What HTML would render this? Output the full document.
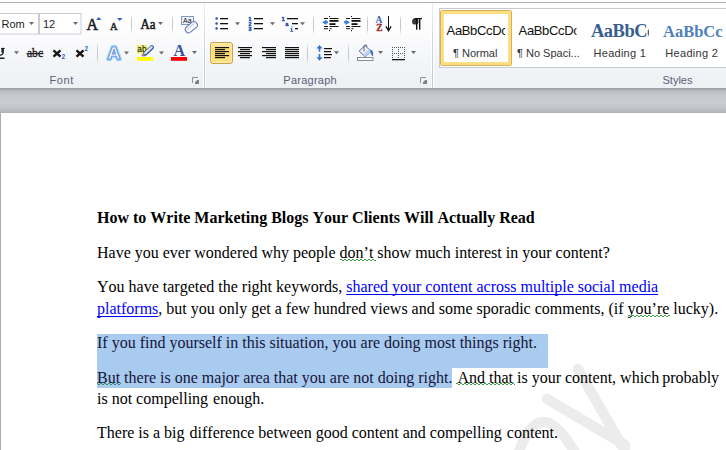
<!DOCTYPE html>
<html><head><meta charset="utf-8">
<style>
*{margin:0;padding:0;box-sizing:border-box}
html,body{width:726px;height:450px;overflow:hidden;background:#fff}
body{position:relative;font-family:"Liberation Sans",sans-serif}
.abs{position:absolute}
#ribbon{position:absolute;left:0;top:0;width:726px;height:89px;background:linear-gradient(#ffffff 0px,#fdfdfe 30px,#f1f3f6 70px,#eef0f3 88px);}
#topline{position:absolute;left:0;top:2px;width:726px;height:1px;background:#b0b4ba}
#rbot{position:absolute;left:0;top:88px;width:726px;height:1px;background:#9fa4ab}
.gsep{position:absolute;top:3px;width:1px;height:85px;background:linear-gradient(#eef0f3,#d3d7dd 40%,#c3c8ce)}
.gsep2{position:absolute;top:3px;width:1px;height:85px;background:#fff}
#band{position:absolute;left:0;top:89px;width:726px;height:24px;background:linear-gradient(#a3a8af 0px,#b9bdc3 2px,#c6cacf 6px,#cacdd2 13px,#c3c7cc 18px,#b8bcc2 22px,#adb1b7 24px)}
#page{position:absolute;left:1px;top:113px;width:725px;height:337px;background:#fff}
#pshadow{position:absolute;left:0;top:113px;width:1px;height:337px;background:#a4abb3}
.lbl{position:absolute;font-size:11px;color:#5b6472;top:73px;letter-spacing:0.1px}
.doc{position:absolute;font-kerning:none;font-family:"Liberation Serif",serif;font-size:16px;color:#000;white-space:pre;line-height:21px}
.sel{position:absolute;background:#a9cbf0}
.lk{color:#0000ff;text-decoration:underline;text-decoration-skip-ink:none;text-underline-offset:2px}
.n3{margin-left:-3px}
</style></head><body>
<div id="ribbon"></div>
<div id="topline"></div>
<div class="gsep2" style="left:203px"></div><div class="gsep" style="left:204px"></div><div class="gsep2" style="left:205px"></div>
<div class="gsep2" style="left:431px"></div><div class="gsep" style="left:432px"></div><div class="gsep2" style="left:433px"></div>
<div id="rbot"></div>
<!--RIBBON-->
<svg class="abs" style="left:0;top:0" width="726" height="89" viewBox="0 0 726 89">
<defs>
<linearGradient id="sepg" x1="0" y1="0" x2="0" y2="1"><stop offset="0" stop-color="#c4c9d1" stop-opacity="0"/><stop offset="0.3" stop-color="#c4c9d1"/><stop offset="0.7" stop-color="#c4c9d1"/><stop offset="1" stop-color="#c4c9d1" stop-opacity="0"/></linearGradient>
<linearGradient id="selg" x1="0" y1="0" x2="0" y2="1"><stop offset="0" stop-color="#fee7a0"/><stop offset="0.5" stop-color="#fdd96f"/><stop offset="1" stop-color="#fde58e"/></linearGradient>
</defs>
<g font-family="Liberation Sans">
<!-- ===== FONT GROUP ===== -->
<rect x="-1" y="13.5" width="39.5" height="20.5" fill="#fff" stroke="#c9ced5"/>
<rect x="39.5" y="13.5" width="41.5" height="20.5" fill="#fff" stroke="#c9ced5"/>
<text x="1.5" y="28" font-size="11" fill="#1e1e1e">Rom</text>
<path d="M29 22h5l-2.5 3z" fill="#6a6a6a"/>
<text x="43" y="28" font-size="11" fill="#1e1e1e">12</text>
<path d="M73 22h5l-2.5 3z" fill="#6a6a6a"/>
<!-- grow / shrink -->
<text x="86.6" y="29.8" font-family="Liberation Serif" font-size="16" fill="#222" stroke="#222" stroke-width="0.55">A</text>
<path d="M96 20h5.5l-2.75-3z" fill="#3864b8"/>
<text x="110" y="29.8" font-family="Liberation Serif" font-size="10.5" fill="#222" stroke="#222" stroke-width="0.45">A</text>
<path d="M117 18h5.5l-2.75 3z" fill="#3864b8"/>
<rect x="131" y="14" width="1" height="20" fill="url(#sepg)"/>
<text x="140.5" y="28.7" font-family="Liberation Serif" font-size="14.5" fill="#1a1a1a" stroke="#1a1a1a" stroke-width="0.55" textLength="15" lengthAdjust="spacingAndGlyphs">Aa</text>
<path d="M158 22h5l-2.5 3z" fill="#6a6a6a"/>
<rect x="172" y="14" width="1" height="20" fill="url(#sepg)"/>
<!-- clear formatting -->
<rect x="181.5" y="16.5" width="12" height="8" fill="#eef3fb" stroke="#7d98c4"/>
<text x="183" y="23" font-size="7" fill="#111" textLength="8.5" lengthAdjust="spacingAndGlyphs">Aa</text>
<g transform="translate(191.3 27.2) rotate(-40)"><rect x="-6.8" y="-3.4" width="13.6" height="6.8" rx="3.4" fill="#f6f8fd" stroke="#5f74ad"/><rect x="-4.5" y="-1.6" width="9.5" height="1.3" fill="#cdd8ee"/></g>
<!-- row 2 -->
<path d="M-2.5 48.6v3.8a2.8 2.8 0 0 0 5.6 0v-3.8" stroke="#1a1a1a" stroke-width="1.3" fill="none"/><path d="M2.4 48.6v4" stroke="#1a1a1a" stroke-width="1.9"/><path d="M1 48.4h3.8" stroke="#1a1a1a" stroke-width="1"/>
<rect x="0" y="57.5" width="4.5" height="1.5" fill="#1a1a1a"/>
<path d="M14 51.3h5l-2.5 3z" fill="#6a6a6a"/>
<text x="27" y="56.5" font-family="Liberation Serif" font-size="13" fill="#1a1a1a" textLength="16" lengthAdjust="spacingAndGlyphs" stroke="#1a1a1a" stroke-width="0.35">abc</text>
<rect x="26.5" y="53" width="17" height="1.2" fill="#222"/>
<path d="M53.5 50.3l7 6.3M60.5 50.3l-7 6.3" stroke="#151515" stroke-width="2.4"/>
<text x="61.6" y="59.2" font-size="6.5" font-weight="bold" fill="#2b62c9">2</text>
<path d="M76.5 50.3l7 6.3M83.5 50.3l-7 6.3" stroke="#151515" stroke-width="2.4"/>
<text x="84.6" y="51.2" font-size="6.5" font-weight="bold" fill="#2b62c9">2</text>
<rect x="97" y="43" width="1" height="21" fill="url(#sepg)"/>
<!-- text effects -->
<path d="M107.8 59.3L112.4 46.8H115.6L120.2 59.3H117.5L116.4 56.2H111.6L110.5 59.3Z M112.3 54H115.7L114 49.2Z" fill="none" stroke="#bfe6fa" stroke-width="4" stroke-linejoin="round"/>
<path d="M107.8 59.3L112.4 46.8H115.6L120.2 59.3H117.5L116.4 56.2H111.6L110.5 59.3Z M112.3 54H115.7L114 49.2Z" fill="none" stroke="#7cc8f2" stroke-width="2.2" stroke-linejoin="round"/>
<path d="M107.8 59.3L112.4 46.8H115.6L120.2 59.3H117.5L116.4 56.2H111.6L110.5 59.3Z M112.3 54H115.7L114 49.2Z" fill="#f1f0fc" fill-rule="evenodd" stroke="#6a8fd8" stroke-width="0.9" stroke-linejoin="round"/>
<path d="M124 51.4h5l-2.5 3z" fill="#6a6a6a"/>
<!-- highlight -->
<rect x="137" y="45" width="10.2" height="8.7" fill="#eeee70"/>
<text x="137.3" y="51.6" font-size="9" fill="#000" textLength="9.2" lengthAdjust="spacingAndGlyphs">ab</text>
<path d="M145.2 53.6l6.6-6.2" stroke="#3d5b9c" stroke-width="4.3" stroke-linecap="round"/>
<path d="M145.2 53.2l6.4-6" stroke="#c9d8ef" stroke-width="2.4" stroke-linecap="round"/>
<path d="M146 52.2l5-4.6" stroke="#f4f8ff" stroke-width="0.9" stroke-linecap="round"/>
<path d="M141.5 55.6l1.2-2.4 2 1.6z" fill="#b88a50"/>
<path d="M141.6 55.8h3.5" stroke="#555" stroke-width="0.9"/>
<rect x="137" y="57" width="16" height="3.8" fill="#ffff00"/>
<path d="M159 51.4h5l-2.5 3z" fill="#6a6a6a"/>
<!-- font color -->
<text x="173.5" y="56" font-family="Liberation Serif" font-weight="bold" font-size="16" fill="#2f4f9c">A</text>
<rect x="171" y="57" width="16" height="3.8" fill="#ff0000"/>
<path d="M192 51h5l-2.5 3z" fill="#6a6a6a"/>
<!-- label + launcher -->
<text x="49.5" y="84" font-size="11" letter-spacing="0.6" fill="#5a5f77">Font</text>
<path d="M192.5 83V77.5H198" stroke="#8d939b" stroke-width="1" fill="none"/>
<rect x="195" y="80" width="4" height="4" fill="#7b8189"/><path d="M195 80h2.2L195 82.2z" fill="#eef0f3"/>

<!-- ===== PARAGRAPH GROUP ===== -->
<g fill="#2a4fa8"><circle cx="216.6" cy="18.6" r="1.25"/><circle cx="216.6" cy="23.5" r="1.25"/><circle cx="216.6" cy="28.5" r="1.25"/></g>
<g fill="#111"><rect x="220" y="18" width="8" height="1.3"/><rect x="220" y="23" width="8" height="1.3"/><rect x="220" y="28" width="8" height="1.3"/></g>
<path d="M235 22.3h5l-2.5 3z" fill="#6a6a6a"/>
<g font-size="5.2" font-weight="bold" fill="#2350b8" stroke="#2350b8" stroke-width="0.45"><text x="248.6" y="20.6">1</text><text x="248.6" y="25.7">2</text><text x="248.6" y="30.9">3</text></g>
<g fill="#111"><rect x="254" y="18" width="9" height="1.3"/><rect x="254" y="23" width="9" height="1.3"/><rect x="254" y="28" width="9" height="1.3"/></g>
<path d="M270 22.3h5l-2.5 3z" fill="#6a6a6a"/>
<g font-size="5.2" font-weight="bold" fill="#2350b8" stroke="#2350b8" stroke-width="0.45"><text x="281.8" y="20.6">1</text><text x="285.6" y="25.8">a</text></g><path d="M290.5 28.3h1.8v2.8h0.9v0.7h-3v-0.7h0.9v-2.1h-0.6z M291.4 26.2h1v1h-1z" fill="#2350b8"/>
<g fill="#111"><rect x="287" y="18" width="11" height="1.3"/><rect x="292" y="23" width="6" height="1.3"/><rect x="295" y="28" width="3" height="1.3"/></g>
<path d="M300 22.3h5l-2.5 3z" fill="#6a6a6a"/>
<rect x="313" y="14" width="1" height="21" fill="url(#sepg)"/>
<!-- indents -->
<g fill="#111">
<rect x="329" y="16" width="1" height="1"/><rect x="329" y="30" width="1" height="1.2"/>
<rect x="324" y="18" width="4" height="1"/><rect x="329.5" y="18" width="9" height="1"/>
<rect x="329.5" y="20" width="9" height="1.8"/>
<rect x="329.5" y="23.2" width="6" height="1.8"/>
<rect x="324" y="26" width="4" height="1"/><rect x="329.5" y="26" width="9" height="1"/>
<rect x="324" y="28.2" width="4" height="1"/><rect x="329.5" y="28.2" width="2" height="1"/>
</g>
<path d="M322 22.3l4.5-2.6v1.6h1.5v2h-1.5v1.6z" fill="#3a7be0"/>
<g fill="#111" transform="translate(22 0)">
<rect x="329" y="16" width="1" height="1"/><rect x="329" y="30" width="1" height="1.2"/>
<rect x="324" y="18" width="4" height="1"/><rect x="329.5" y="18" width="9" height="1"/>
<rect x="329.5" y="20" width="9" height="1.8"/>
<rect x="329.5" y="23.2" width="6" height="1.8"/>
<rect x="324" y="26" width="4" height="1"/><rect x="329.5" y="26" width="9" height="1"/>
<rect x="324" y="28.2" width="4" height="1"/><rect x="329.5" y="28.2" width="2" height="1"/>
</g>
<path d="M350 22.3l-4.5-2.6v1.6h-1.5v2h1.5v1.6z" fill="#3a7be0"/>
<rect x="367" y="14" width="1" height="21" fill="url(#sepg)"/>
<!-- sort -->
<text x="375.6" y="22.7" font-family="Liberation Serif" font-weight="bold" font-size="9.5" fill="#3162b8">A</text>
<text x="376.3" y="30.7" font-family="Liberation Serif" font-weight="bold" font-size="9.5" fill="#9c2f2f" stroke="#9c2f2f" stroke-width="0.3">Z</text>
<rect x="388" y="16" width="1" height="13" fill="#111"/>
<path d="M385.9 26.4l2.6 4.4 2.6-4.4" stroke="#111" stroke-width="1.3" fill="none"/>
<rect x="400" y="14" width="1" height="21" fill="url(#sepg)"/>
<!-- pilcrow -->
<circle cx="415.3" cy="21.4" r="3.2" fill="#363636"/>
<rect x="414.5" y="18" width="7.5" height="1.2" fill="#111"/>
<rect x="416" y="18" width="1.4" height="11.7" fill="#111"/>
<rect x="419" y="18" width="1.4" height="11.7" fill="#111"/>
<!-- align buttons -->
<rect x="210.5" y="42.5" width="22" height="21" rx="2.5" fill="url(#selg)" stroke="#c9a14a"/>
<rect x="211.5" y="43.5" width="20" height="19" rx="2" fill="none" stroke="#fff2c4" stroke-opacity="0.6"/>
<g fill="#111">
<rect x="215" y="47" width="14" height="1.2"/><rect x="215" y="49" width="10" height="1.2"/><rect x="215" y="51" width="14" height="1.2"/><rect x="215" y="53" width="10" height="1.2"/><rect x="215" y="55" width="14" height="1.2"/><rect x="215" y="57" width="10" height="1.2"/>
<rect x="238" y="47" width="14" height="1.2"/><rect x="240" y="49" width="10" height="1.2"/><rect x="238" y="51" width="14" height="1.2"/><rect x="240" y="53" width="10" height="1.2"/><rect x="238" y="55" width="14" height="1.2"/><rect x="240" y="57" width="10" height="1.2"/>
<rect x="262" y="47" width="14" height="1.2"/><rect x="266" y="49" width="10" height="1.2"/><rect x="262" y="51" width="14" height="1.2"/><rect x="266" y="53" width="10" height="1.2"/><rect x="262" y="55" width="14" height="1.2"/><rect x="266" y="57" width="10" height="1.2"/>
<rect x="285" y="47" width="14" height="1.2"/><rect x="285" y="49" width="14" height="1.2"/><rect x="285" y="51" width="14" height="1.2"/><rect x="285" y="53" width="14" height="1.2"/><rect x="285" y="55" width="14" height="1.2"/><rect x="285" y="57" width="14" height="1.2"/>
</g>
<rect x="307" y="43" width="1" height="21" fill="url(#sepg)"/>
<!-- line spacing -->
<path d="M319.5 45l-3 3.5h2.2v3.3h1.6v-3.3h2.2z M319.5 60.8l-3-3.5h2.2v-3.3h1.6v3.3h2.2z" fill="#2f72d6"/>
<g fill="#111"><rect x="324" y="48" width="8" height="1.2"/><rect x="324" y="51" width="7" height="1.2"/><rect x="324" y="54" width="8" height="1.2"/><rect x="324" y="57" width="7" height="1.2"/></g>
<path d="M334 51.2h5l-2.5 3z" fill="#6a6a6a"/>
<rect x="348" y="43" width="1" height="21" fill="url(#sepg)"/>
<!-- shading -->
<path d="M365 45.5l6 5.8-5.8 5.5-6-5.8z" fill="#f5f8fd" stroke="#3f5fa8" stroke-width="1"/>
<path d="M365.2 56.8l6-5.5-2.5-2.5-5.8 5.5z" fill="#c6d5ee"/>
<path d="M364 51.5v-5a1.5 1.5 0 0 1 3 0" stroke="#555" stroke-width="0.9" fill="none"/>
<path d="M370 49.5c2.5 0 3.5 3 3 7-1.5-1-2.5-3-3-7z" fill="#2f6fd0"/>
<rect x="357.5" y="57.5" width="15.5" height="3" fill="#fff" stroke="#8c8c8c"/>
<path d="M378 51h5l-2.5 3z" fill="#6a6a6a"/>
<!-- borders -->
<path d="M392 47h1v1h-1zM392 53h1v1h-1zM394 47h1v1h-1zM394 53h1v1h-1zM396 47h1v1h-1zM396 53h1v1h-1zM398 47h1v1h-1zM398 53h1v1h-1zM400 47h1v1h-1zM400 53h1v1h-1zM402 47h1v1h-1zM402 53h1v1h-1zM404 47h1v1h-1zM404 53h1v1h-1zM392 49h1v1h-1zM398 49h1v1h-1zM404 49h1v1h-1zM392 51h1v1h-1zM398 51h1v1h-1zM404 51h1v1h-1zM392 53h1v1h-1zM398 53h1v1h-1zM404 53h1v1h-1zM392 55h1v1h-1zM398 55h1v1h-1zM404 55h1v1h-1zM392 57h1v1h-1zM398 57h1v1h-1zM404 57h1v1h-1z" fill="#555"/>
<rect x="392" y="59" width="13" height="1.3" fill="#111"/>
<path d="M411 51h5l-2.5 3z" fill="#6a6a6a"/>
<text x="283.3" y="84" font-size="11" letter-spacing="0.25" fill="#5a5f77">Paragraph</text>
<path d="M420.5 83V77.5H426" stroke="#8d939b" stroke-width="1" fill="none"/>
<rect x="423" y="80" width="4" height="4" fill="#7b8189"/><path d="M423 80h2.2L423 82.2z" fill="#eef0f3"/>

<!-- ===== STYLES GROUP ===== -->
<rect x="439.5" y="8.5" width="300" height="59" fill="#fff" stroke="#c6cbd3"/>
<rect x="440.5" y="10.5" width="71" height="55" rx="1.5" fill="none" stroke="#dcb058"/>
<rect x="442.5" y="12.5" width="67" height="51" fill="none" stroke="#fddf82" stroke-width="3"/>
<rect x="444" y="14" width="64" height="48" fill="#fff"/>
<svg x="444" y="14" width="61" height="48"><text x="2.6" y="21" font-size="13" letter-spacing="-0.35" fill="#111">AaBbCcDc</text></svg>
<text x="453" y="57" font-size="11" fill="#333">¶ Normal</text>
<svg x="516" y="14" width="60.5" height="48"><text x="2.6" y="21" font-size="13" letter-spacing="-0.35" fill="#111">AaBbCcDc</text></svg>
<text x="517" y="57" font-size="11" fill="#333">¶ No Spaci...</text>
<svg x="588" y="14" width="61" height="48"><text x="3" y="23" font-family="Liberation Serif" font-weight="bold" font-size="18.5" letter-spacing="-0.5" fill="#365f91">AaBbCc</text></svg>
<text x="593.6" y="57" font-size="11" letter-spacing="0.25" fill="#333">Heading 1</text>
<svg x="660" y="14" width="66" height="48"><text x="3" y="22.8" font-family="Liberation Serif" font-weight="bold" font-size="16.5" fill="#4f81bd">AaBbCc</text></svg>
<text x="665.3" y="57" font-size="11" letter-spacing="0.3" fill="#333">Heading 2</text>
<text x="662.5" y="84" font-size="11" fill="#5a5f77">Styles</text>
</g>
</svg>
<!--/RIBBON-->
<div id="band"></div>
<div id="pshadow"></div>
<div id="page"></div>
<svg class="abs" style="left:0;top:0" width="726" height="450">
<g stroke="#ececec" fill="none" stroke-width="10.5" stroke-linecap="round">
<path d="M578 369L630 460"/>
<path d="M547 399L625 445"/>
<path d="M517 458Q539 386 578 458" stroke-linecap="butt"/>
</g></svg>


<!-- selection -->
<div class="sel" style="left:97px;top:334px;width:451px;height:34px"></div>
<div class="sel" style="left:97px;top:367px;width:355px;height:21px"></div>
<svg class="abs" style="left:0;top:0" width="726" height="450" shape-rendering="crispEdges"><path d="M340 259h1v1h-1zM341 259h1v1h-1zM342 260h1v1h-1zM343 260h1v1h-1zM344 259h1v1h-1zM345 259h1v1h-1zM346 260h1v1h-1zM347 260h1v1h-1zM348 259h1v1h-1zM349 259h1v1h-1zM350 260h1v1h-1zM351 260h1v1h-1zM352 259h1v1h-1zM353 259h1v1h-1zM354 260h1v1h-1zM355 260h1v1h-1zM356 259h1v1h-1zM357 259h1v1h-1zM358 260h1v1h-1zM359 260h1v1h-1zM360 259h1v1h-1zM361 259h1v1h-1zM362 260h1v1h-1zM363 260h1v1h-1zM364 259h1v1h-1zM365 259h1v1h-1zM366 260h1v1h-1zM367 260h1v1h-1zM368 259h1v1h-1zM369 259h1v1h-1zM370 260h1v1h-1zM371 260h1v1h-1zM372 259h1v1h-1zM373 259h1v1h-1zM374 260h1v1h-1zM375 260h1v1h-1z" fill="#3f9f45"/><path d="M628 315h1v1h-1zM629 315h1v1h-1zM630 316h1v1h-1zM631 316h1v1h-1zM632 315h1v1h-1zM633 315h1v1h-1zM634 316h1v1h-1zM635 316h1v1h-1zM636 315h1v1h-1zM637 315h1v1h-1zM638 316h1v1h-1zM639 316h1v1h-1zM640 315h1v1h-1zM641 315h1v1h-1zM642 316h1v1h-1zM643 316h1v1h-1zM644 315h1v1h-1zM645 315h1v1h-1zM646 316h1v1h-1zM647 316h1v1h-1zM648 315h1v1h-1zM649 315h1v1h-1zM650 316h1v1h-1zM651 316h1v1h-1zM652 315h1v1h-1zM653 315h1v1h-1zM654 316h1v1h-1zM655 316h1v1h-1zM656 315h1v1h-1zM657 315h1v1h-1zM658 316h1v1h-1zM659 316h1v1h-1zM660 315h1v1h-1zM661 315h1v1h-1zM662 316h1v1h-1zM663 316h1v1h-1zM664 315h1v1h-1zM665 315h1v1h-1zM666 316h1v1h-1zM667 316h1v1h-1zM668 315h1v1h-1zM669 315h1v1h-1z" fill="#3f9f45"/><path d="M97 383h1v1h-1zM98 384h1v1h-1zM99 384h1v1h-1zM100 383h1v1h-1zM101 383h1v1h-1zM102 384h1v1h-1zM103 384h1v1h-1zM104 383h1v1h-1zM105 383h1v1h-1zM106 384h1v1h-1zM107 384h1v1h-1zM108 383h1v1h-1zM109 383h1v1h-1zM110 384h1v1h-1zM111 384h1v1h-1zM112 383h1v1h-1zM113 383h1v1h-1zM114 384h1v1h-1zM115 384h1v1h-1zM116 383h1v1h-1zM117 383h1v1h-1zM118 384h1v1h-1zM119 384h1v1h-1zM120 383h1v1h-1z" fill="#3b8f6a"/><path d="M456 383h1v1h-1zM457 383h1v1h-1zM458 384h1v1h-1zM459 384h1v1h-1zM460 383h1v1h-1zM461 383h1v1h-1zM462 384h1v1h-1zM463 384h1v1h-1zM464 383h1v1h-1zM465 383h1v1h-1zM466 384h1v1h-1zM467 384h1v1h-1zM468 383h1v1h-1zM469 383h1v1h-1zM470 384h1v1h-1zM471 384h1v1h-1zM472 383h1v1h-1zM473 383h1v1h-1zM474 384h1v1h-1zM475 384h1v1h-1zM476 383h1v1h-1zM477 383h1v1h-1zM478 384h1v1h-1zM479 384h1v1h-1zM480 383h1v1h-1zM481 383h1v1h-1zM482 384h1v1h-1zM483 384h1v1h-1zM484 383h1v1h-1zM485 383h1v1h-1zM486 384h1v1h-1zM487 384h1v1h-1zM488 383h1v1h-1zM489 383h1v1h-1zM490 384h1v1h-1zM491 384h1v1h-1zM492 383h1v1h-1zM493 383h1v1h-1zM494 384h1v1h-1zM495 384h1v1h-1zM496 383h1v1h-1zM497 383h1v1h-1zM498 384h1v1h-1zM499 384h1v1h-1zM500 383h1v1h-1zM501 383h1v1h-1zM502 384h1v1h-1zM503 384h1v1h-1zM504 383h1v1h-1zM505 383h1v1h-1zM506 384h1v1h-1zM507 384h1v1h-1zM508 383h1v1h-1zM509 383h1v1h-1zM510 384h1v1h-1zM511 384h1v1h-1zM512 383h1v1h-1zM513 383h1v1h-1zM514 384h1v1h-1z" fill="#3f9f45"/></svg>

<div class="doc" style="left:97px;top:207px;font-weight:bold">How to Write Marketing Blogs Your Clients Will Actually Read</div>
<div class="doc" style="left:97px;top:242px">Have you ever wondered why people don’t show much interest in your content?</div>
<div class="doc" style="left:97px;top:276px">You have targeted the right keywords, <span class="lk">shared your content across multiple social media</span></div>
<div class="doc" style="left:97px;top:298px"><span class="lk">platforms</span>, but you only get a few hundred views and some sporadic comments, (if you’re lucky).</div>
<div class="doc" style="left:97px;top:332px;color:#15153a">If you find yourself in this situation, you are doing most things right.</div>
<div class="doc" style="left:97px;top:367px"><span style="color:#15153a">But there is one major area that you are not doing right.</span> <i class="n3"></i> And that is your content, which <i style="margin-left:-1px"></i>probably</div>
<div class="doc" style="left:97px;top:388px">is not compelling <i class="n3"></i> enough.</div>
<div class="doc" style="left:97px;top:422px">There is a big <i class="n3"></i> difference between good content and compelling <i class="n3"></i> content.</div>
</body></html>
